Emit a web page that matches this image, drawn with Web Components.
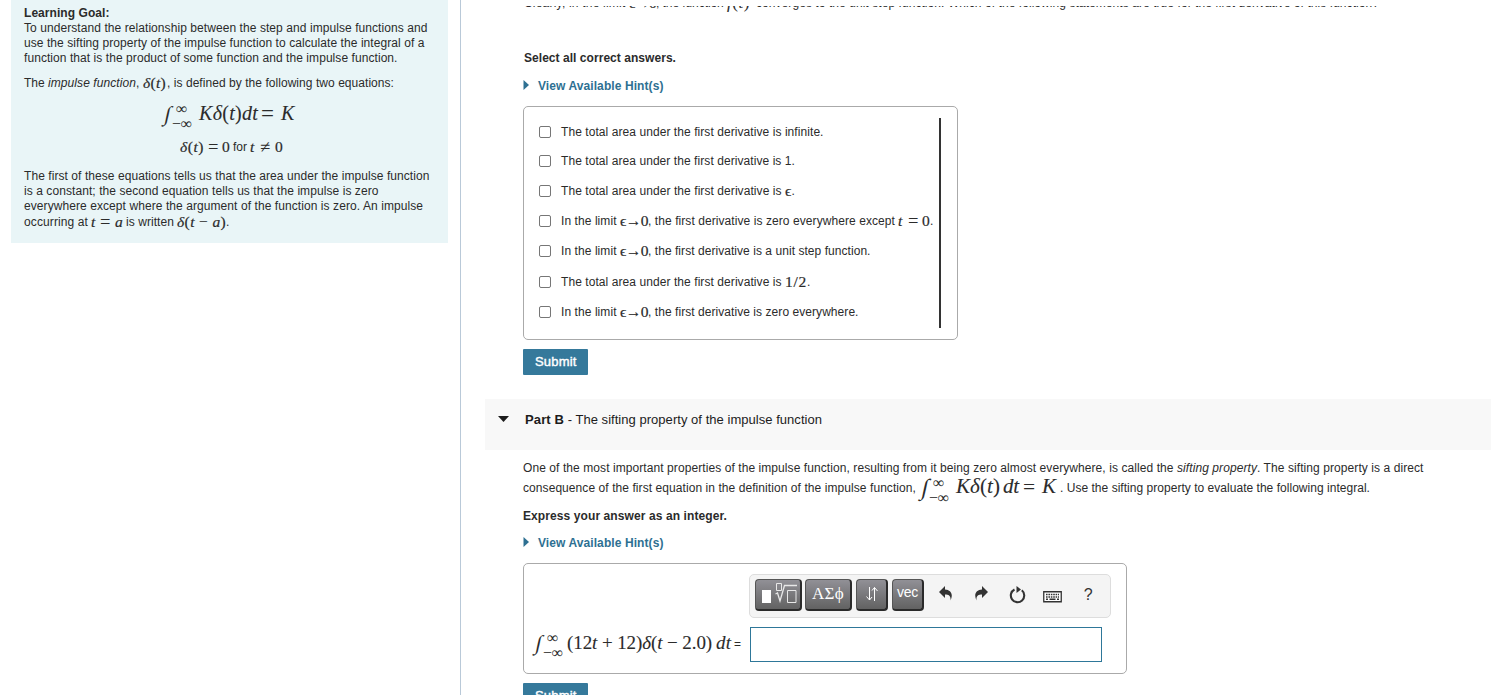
<!DOCTYPE html>
<html lang="en"><head><meta charset="utf-8"><title>Impulse functions</title>
<style>html,body{margin:0;height:100%;overflow:hidden;background:#fff;font:12px "Liberation Sans",Arial,sans-serif;color:#2b2b2b}</style></head>
<body><course-page></course-page>
<script>
const define=(name,css,html,init)=>customElements.define(name,class extends HTMLElement{
  connectedCallback(){
    if(this.shadowRoot)return;
    const root=this.attachShadow({mode:'open'}),t=document.createElement('template');
    t.innerHTML=`<style>${css}</style>${html}`;
    root.append(t.content.cloneNode(true));
    customElements.upgrade(root);
    if(init)init(this,root);
  }
});

define('course-page',`:host{display:flex;width:1491px;height:695px;overflow:hidden}
aside{width:460px;flex:none;border-right:1px solid #b9c9d8}
main{flex:1;min-width:0}`,
`<aside><goal-panel></goal-panel></aside><main><part-a></part-a><part-b></part-b></main>`);

define('goal-panel',`:host{display:block;box-sizing:border-box;margin-left:11px;width:437px;height:243px;padding:6px 0 0 13px;background:#e9f5f7}`,
`<text-line><b><fit-run w="85.500">Learning Goal:</fit-run></b></text-line>
<text-line><fit-run w="403.500">To understand the relationship between the step and impulse functions and</fit-run></text-line>
<text-line><fit-run w="400.500">use the sifting property of the impulse function to calculate the integral of a</fit-run></text-line>
<text-line><fit-run w="373.500">function that is the product of some function and the impulse function.</fit-run></text-line>
<text-line top="10"><fit-run w="24">The </fit-run><i><fit-run w="88">impulse function</fit-run></i><fit-run w="4">,</fit-run><math-run g="3" w="23">[δ](t)</math-run><fit-run g="1" w="227">, is defined by the following two equations:</fit-run></text-line>
<text-line top="17"><integral-sign style="margin-left:140px"></integral-sign><math-run size="20" g="5" w="59">[K][δ](t)[dt]</math-run><math-run size="23" g="3" w="14">=</math-run><math-run size="20" g="6" w="16">[K]</math-run></text-line>
<text-line top="17"><math-run g="156" w="24">[δ](t)</math-run><math-run size="18.500" g="4" w="10">=</math-run><math-run g="4" w="8">0</math-run><fit-run g="3" w="14">for</fit-run><math-run g="3" w="6">[t]</math-run><math-run size="18.500" g="4" w="11">≠</math-run><math-run g="4" w="8">0</math-run></text-line>
<text-line top="14"><fit-run w="405.500">The first of these equations tells us that the area under the impulse function</fit-run></text-line>
<text-line><fit-run w="354.500">is a constant; the second equation tells us that the impulse is zero</fit-run></text-line>
<text-line><fit-run w="399">everywhere except where the argument of the function is zero. An impulse</fit-run></text-line>
<text-line top="1"><fit-run w="64">occurring at</fit-run><math-run g="3" w="6">[t]</math-run><math-run size="18.500" g="3" w="11">=</math-run><math-run g="4" w="9">[a]</math-run><fit-run g="2" w="48">is written</fit-run><math-run g="3" w="49">[δ](t − [a])</math-run><fit-run w="3">.</fit-run></text-line>`);

define('part-a',`:host{display:block;height:399px;padding-left:62px;box-sizing:border-box}
.cut{display:block;height:7px;padding-top:6px}.cut div{height:7px;overflow:hidden}.cut text-line{margin-top:-10px}
.box{box-sizing:border-box;margin-top:12px;width:435px;height:234px;border:1px solid #aaa;border-radius:5px;display:flex;padding:11px 16px 0 15px;justify-content:space-between}
.bar{width:2px;height:210px;background:#333;flex:none}
.opts{width:400px}submit-button{margin-top:9px}`,
`<div class="cut"><div><text-line><fit-run g="1" w="105">Clearly, in the limit </fit-run><math-run w="27">ϵ→0</math-run><fit-run w="71">, the function </fit-run><math-run size="17" w="23">[f](t)</math-run><fit-run g="6" w="623">converges to the unit step function. Which of the following statements are true for the first derivative of this function?</fit-run></text-line></div></div>
<text-line top="38"><b><fit-run g="1" w="152">Select all correct answers.</fit-run></b></text-line>
<hint-link style="margin-top:13px"></hint-link>
<div class="box"><div class="opts">
<check-option style="margin-top:6px"><fit-run w="262.500">The total area under the first derivative is infinite.</fit-run></check-option>
<check-option style="margin-top:14px"><fit-run w="234">The total area under the first derivative is 1.</fit-run></check-option>
<check-option style="margin-top:15px"><fit-run w="224">The total area under the first derivative is </fit-run><math-run w="6.500">ϵ</math-run><fit-run w="2">.</fit-run></check-option>
<check-option style="margin-top:15px"><fit-run w="59">In the limit </fit-run><math-run w="28">ϵ→0</math-run><fit-run w="247">, the first derivative is zero everywhere except</fit-run><math-run g="3" w="6">[t]</math-run><math-run size="18.500" g="4" w="11">=</math-run><math-run g="3" w="8">0</math-run><fit-run w="3">.</fit-run></check-option>
<check-option style="margin-top:15px"><fit-run w="59">In the limit </fit-run><math-run w="28">ϵ→0</math-run><fit-run w="222.500">, the first derivative is a unit step function.</fit-run></check-option>
<check-option style="margin-top:16px"><fit-run w="224">The total area under the first derivative is </fit-run><math-run w="22">1/2</math-run><fit-run w="3">.</fit-run></check-option>
<check-option style="margin-top:15px"><fit-run w="59">In the limit </fit-run><math-run w="28">ϵ→0</math-run><fit-run w="210.500">, the first derivative is zero everywhere.</fit-run></check-option>
</div><div class="bar"></div></div>
<submit-button></submit-button>`);

define('part-b',`:host{display:block}
header{margin-left:24px;height:51px;box-sizing:border-box;background:#f8f8f8;padding:17px 0 0 13px;display:flex;font-size:13px;margin-bottom:11px;color:#1c1c1c}
header svg{flex:none;margin-right:16px}header text-line{margin-top:-4px}
section{padding-left:62px}
.box{box-sizing:border-box;width:604px;height:111px;border:1px solid #aaa;border-radius:5px;margin-top:12px;display:flex;padding:10px 15px 0 11px}
.expr{width:214px;padding-top:63px}
.right{width:362px}
.input{box-sizing:border-box;width:352px;height:35px;border:1px solid #2e7799;margin:9px 0 0 1px}
submit-button{margin-top:9px}`,
`<header><svg width="11" height="7"><path d="M0 0h11L5.5 6z" fill="#1c1c1c"/></svg><text-line><b><fit-run w="39">Part B</fit-run></b><fit-run w="258">&nbsp;- The sifting property of the impulse function</fit-run></text-line></header>
<section><text-line><fit-run w="654">One of the most important properties of the impulse function, resulting from it being zero almost everywhere, is called the </fit-run><i><fit-run w="80">sifting property</fit-run></i><fit-run w="166.500">. The sifting property is a direct</fit-run></text-line>
<text-line top="5"><fit-run w="393">consequence of the first equation in the definition of the impulse function,</fit-run><integral-sign class="big" style="margin-left:5px"></integral-sign><math-run size="21" g="5" w="44">[K][δ](t)</math-run><math-run size="21" g="3" w="16">[dt]</math-run><math-run size="21.500" g="4" w="15">=</math-run><math-run size="21" g="4" w="18">[K]</math-run><fit-run w="310">. Use the sifting property to evaluate the following integral.</fit-run></text-line>
<text-line top="13"><b><fit-run w="204">Express your answer as an integer.</fit-run></b></text-line>
<hint-link style="margin-top:12px"></hint-link>
<div class="box"><div class="expr"><text-line><integral-sign></integral-sign><math-run size="19" g="2" w="145">(12[t] + 12)[δ]([t] − 2.0)</math-run><math-run size="19" g="4" w="15">[dt]</math-run><fit-run g="3" w="8">=</fit-run></text-line></div>
<div class="right"><math-toolbar></math-toolbar><div class="input"></div></div></div>
<submit-button></submit-button></section>`);

define('math-toolbar',`:host{display:flex;box-sizing:border-box;width:362px;height:44px;background:#f4f4f4;border:1px solid #ddd;border-radius:5px;padding:4px 5px}
.b{box-sizing:border-box;height:32px;border:1px solid #555;border-right:2px solid #2a2a2a;border-bottom:2px solid #2a2a2a;border-radius:4px;background:linear-gradient(#919096,#626262);color:#fff;display:flex;justify-content:center;align-items:center;flex:none;margin-right:3px}
.v{font-size:14px;padding-bottom:5px}.g{font:17px "Liberation Serif",serif;padding-bottom:2px}
.i{flex:none;width:35.600px;display:flex;justify-content:center;padding-top:7px;height:20px;color:#333}
.q{font-size:16px;line-height:18px}svg{display:block;flex:none}`,
`<div class="b" style="width:47px;padding-bottom:5px"><svg width="37" height="24" fill="none" stroke="#e8e8e8"><path d="M2 10h9v13H2z" fill="#fff" stroke="none"/><path d="M16.500 3.500h5v7h-5z"/><path d="M15.500 14l2-1 2.500 8L24.500 5.500H37" stroke-width="1.300"/><path d="M27.500 10.500h8.500v12h-8.500z"/></svg></div>
<div class="b g" style="width:47px"><fit-run w="32">ΑΣϕ</fit-run></div>
<div class="b" style="width:32px;margin:0 4px 0 1px;padding-bottom:2px"><svg width="14" height="16" fill="none" stroke="#fff"><path d="M4.500 1v13M1.500 10.500l3 3.500 2.500-3M9.500 15V1.500M7 4.500l2.500-3 3 3.500"/></svg></div>
<div class="b v" style="width:32px;margin-right:4px"><fit-run w="21">vec</fit-run></div>
<div class="i"><svg width="14" height="15"><path d="M0 6L6 0v3.500C12 4 14.500 8 11.500 14.500 12 10 10 8.500 6 8.500V12z" fill="#333"/></svg></div>
<div class="i"><svg width="14" height="15"><path d="M14 6L8 0v3.500C2 4-.5 8 2.500 14.500 2 10 4 8.500 8 8.500V12z" fill="#333"/></svg></div>
<div class="i"><svg width="17" height="18" style="margin-left:1px"><path d="M5.500 3.500A6.700 6.700 0 1 0 12.800 4.300" fill="none" stroke="#333" stroke-width="2.100"/><path d="M7.500 0l4.500 3.400L7.500 7z" fill="#333"/></svg></div>
<div class="i"><svg width="19" height="18"><path d="M.75 5.750h17.500v10H.75z" fill="#fff" stroke="#333" stroke-width="1.300"/><path d="M3 8.500h13M3 10.900h13" stroke="#333" stroke-width="1.500" stroke-dasharray="1.600 .8"/><path d="M3 13.300h2m1.500 0h6m1.500 0h2" stroke="#333" stroke-width="1.400"/></svg></div>
<div class="i q">?</div>`);

define('check-option',`:host{display:flex;height:15px;align-items:flex-start}
.c{box-sizing:border-box;width:12px;height:12px;border:1px solid #767676;border-radius:2px;background:#fff;margin:2px 10px 0 0;flex:none}text-line{margin-top:1px}`,
`<span class="c"></span><text-line><slot></slot></text-line>`);

define('hint-link',`:host{display:flex;height:15px;color:#2e7092}svg{margin:1px 9px 0 0;flex:none}`,
`<svg width="6" height="10"><path d="M.5 0L6 5 .5 10z" fill="#2e7092"/></svg><text-line><b><fit-run w="125.500">View Available Hint(s)</fit-run></b></text-line>`);

define('submit-button',`:host{display:flex;box-sizing:border-box;width:65px;height:26px;background:#35799b;border-radius:1px;color:#fff;font-size:13px;padding:5px 0 0 12px;-webkit-text-stroke:.4px #fff}`,
`<text-line><fit-run w="41.500">Submit</fit-run></text-line>`);

define('text-line',`:host{display:block;height:15px;line-height:15px;white-space:pre}`,`<slot></slot>`,
h=>{if(h.hasAttribute('top'))h.style.marginTop=h.getAttribute('top')+'px'});

define('integral-sign',`:host{display:inline-grid;grid-template-columns:12px 19px;grid-template-rows:8px 13px;width:30px;height:21px;vertical-align:-3px;line-height:0;margin-top:-14px;margin-bottom:-14px;font-family:"Liberation Serif",serif}
:host(.big){vertical-align:-4px}
.s{grid-row:1/3;font-size:21px;line-height:20px;font-style:italic;width:8px;transform:translate(1px,-1px) skewX(-12deg)}
:host(.big) .s{font-size:23px}
.u,.l{font-size:16px;line-height:7px}.l{margin:7px 0 0 -4px;letter-spacing:-.2px}`,
`<span class="s">∫</span><span class="u">∞</span><span class="l">−∞</span>`);

const fit=h=>{
  if(h.hasAttribute('g'))h.style.marginLeft=h.getAttribute('g')+'px';
  const w=h.getBoundingClientRect().width,n=h.textContent.length||1;
  h.style.letterSpacing=((+h.getAttribute('w')-w)/n).toFixed(3)+'px';
};
customElements.define('math-run',class extends HTMLElement{
  connectedCallback(){
    if(this.shadowRoot)return;
    const size=this.getAttribute('size')||'15.5';
    const body=this.textContent.replace(/\[(.+?)\]/g,'<i>$1</i>').replace(/\(t/g,'(<i>t</i>');
    const sign=/^[=≠]$/.test(body);
    const stroke=sign?0:size<17?.2:.1;
    this.textContent='';
    const root=this.attachShadow({mode:'open'});
    root.innerHTML=`<style>:host{display:inline;font:${size}px/0 "Liberation Serif","DejaVu Serif",serif;white-space:pre;vertical-align:${sign?-2:-1}px;-webkit-text-stroke:${stroke}px currentColor}</style><span>${body}</span>`;
    if(this.hasAttribute('g'))this.style.marginLeft=this.getAttribute('g')+'px';
    const s=root.querySelector('span');
    s.style.letterSpacing=((+this.getAttribute('w')-s.getBoundingClientRect().width)/s.textContent.length).toFixed(3)+'px';
  }
});
define('fit-run',`:host{display:inline;white-space:pre}`,`<slot></slot>`,fit);
</script></body></html>
